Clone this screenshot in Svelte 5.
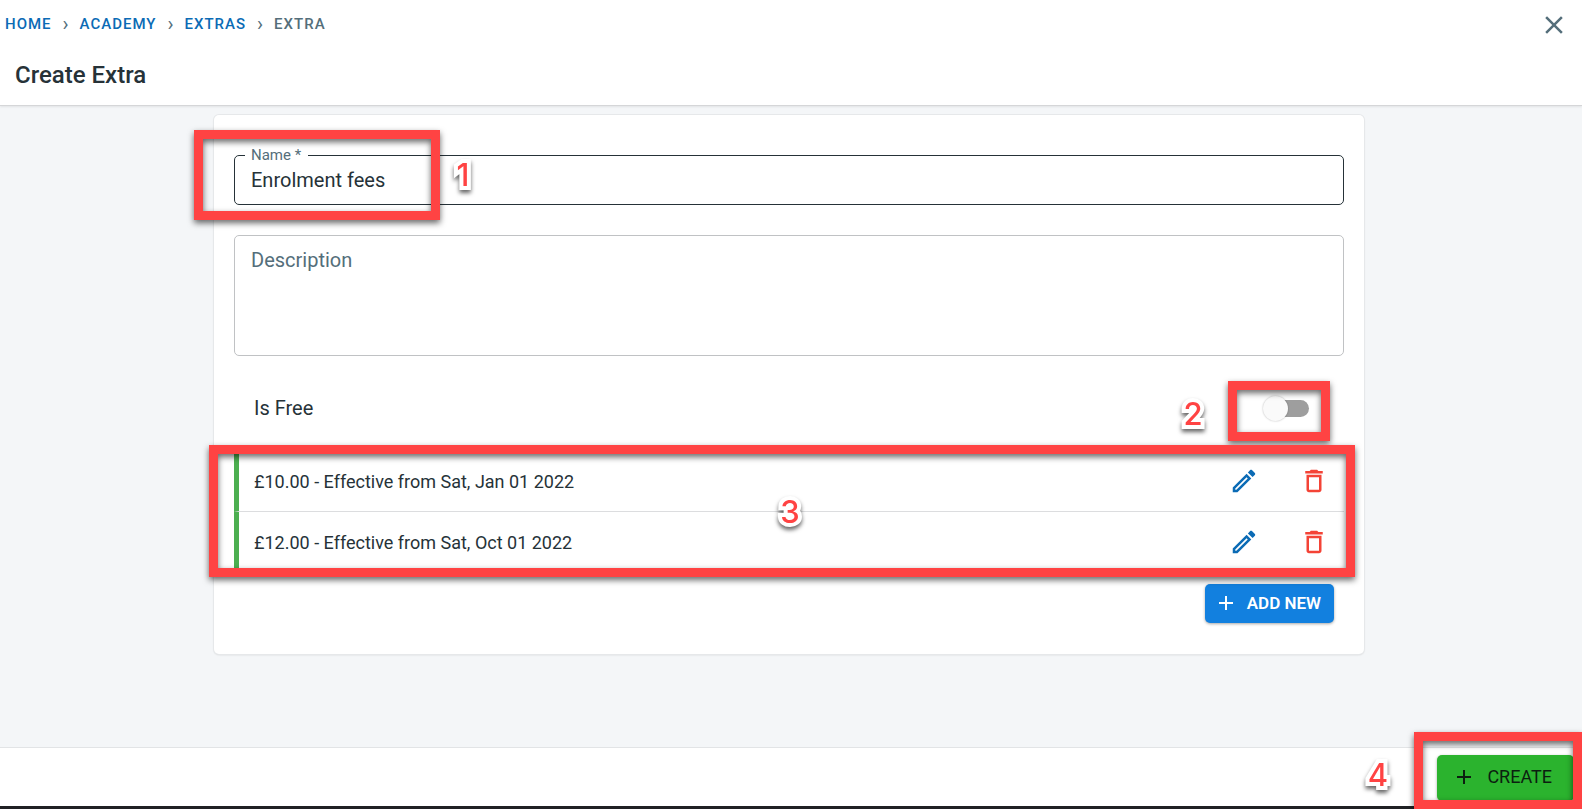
<script>
  const crumbs = ['Home', 'Academy', 'Extras'];
  const prices = [
    { amount: '£10.00', from: 'Sat, Jan 01 2022' },
    { amount: '£12.00', from: 'Sat, Oct 01 2022' }
  ];
  let name = $state('Enrolment fees');
  let description = $state('');
  let isFree = $state(false);
</script>

<div class="page">
  <header>
    <div class="top">
      <nav aria-label="Breadcrumb">
        {#each crumbs as crumb}
          <a href="#{crumb.toLowerCase()}">{crumb}</a><span class="sep">›</span>
        {/each}
        <span class="current">Extra</span>
      </nav>
      <button class="icon close" aria-label="Close">
        <svg viewBox="0 0 24 24"><path d="M19 6.41 17.59 5 12 10.59 6.41 5 5 6.41 10.59 12 5 17.59 6.41 19 12 13.41 17.59 19 19 17.59 13.41 12z" /></svg>
      </button>
    </div>
    <h1>Create Extra</h1>
  </header>

  <main>
    <form class="card" id="extra-form">
      <div class="field">
        <label for="name">Name *</label>
        <input id="name" type="text" bind:value={name} />
        <span class="frame frame-name"></span>
        <span class="mark mark-name">1</span>
      </div>

      <textarea aria-label="Description" placeholder="Description" bind:value={description}></textarea>

      <div class="free">
        <label for="free">Is Free</label>
        <input id="free" type="checkbox" role="switch" bind:checked={isFree} />
        <span class="frame frame-free"></span>
        <span class="mark mark-free">2</span>
      </div>

      <div class="prices">
        <ul>
          {#each prices as price}
            <li>
              <span class="price">{price.amount} - Effective from {price.from}</span>
              <button type="button" class="icon edit" aria-label="Edit price">
                <svg viewBox="0 0 24 24"><path d="m14.06 9.02.92.92L5.92 19H5v-.92l9.06-9.06M17.66 3c-.25 0-.51.1-.7.29l-1.83 1.83 3.75 3.75 1.83-1.83c.39-.39.39-1.02 0-1.41l-2.34-2.34c-.2-.2-.45-.29-.71-.29zm-3.6 3.19L3 17.25V21h3.75L17.81 9.94l-3.75-3.75z" /></svg>
              </button>
              <button type="button" class="icon delete" aria-label="Delete price">
                <svg viewBox="0 0 24 24"><path d="M6 19c0 1.1.9 2 2 2h8c1.1 0 2-.9 2-2V7H6v12zM8 9h8v10H8V9zm7.5-5-1-1h-5l-1 1H5v2h14V4h-3.5z" /></svg>
              </button>
            </li>
          {/each}
        </ul>
        <span class="frame frame-prices"></span>
        <span class="mark mark-prices">3</span>
      </div>

      <button type="button" class="btn add">
        <svg viewBox="0 0 24 24"><path d="M19 13h-6v6h-2v-6H5v-2h6V5h2v6h6v2z" /></svg>
        Add new
      </button>
    </form>
  </main>

  <footer>
    <button type="submit" form="extra-form" class="btn create">
      <svg viewBox="0 0 24 24"><path d="M19 13h-6v6h-2v-6H5v-2h6V5h2v6h6v2z" /></svg>
      Create
    </button>
    <span class="frame frame-create"></span>
    <span class="mark mark-create">4</span>
  </footer>
</div>

<style>
  :global(body) {
    margin: 0;
  }
  .page,
  .page * {
    box-sizing: border-box;
  }
  .page {
    display: flex;
    flex-direction: column;
    min-height: 100vh;
    overflow: hidden;
    background: #f4f6f8;
    color: #263238;
    font-family: Roboto, 'Liberation Sans', sans-serif;
  }
  button,
  input,
  textarea {
    font: inherit;
    color: inherit;
  }
  button {
    border: 0;
    padding: 0;
    background: none;
    cursor: pointer;
  }
  svg {
    display: block;
    fill: currentColor;
  }

  header {
    background: #fff;
    border-bottom: 1px solid #d5d6d8;
    box-shadow: 0 1px 2px rgba(0, 0, 0, 0.08);
    padding-bottom: 15px;
  }
  .top {
    display: flex;
    justify-content: space-between;
    align-items: center;
    height: 50px;
    padding: 0 13px 0 5px;
  }
  nav {
    display: flex;
    align-items: center;
    padding-bottom: 2px;
    font-size: 15px;
    font-weight: 500;
    line-height: 20px;
    letter-spacing: 1px;
    text-transform: uppercase;
    color: #546e7a;
  }
  nav a {
    color: #0b6bb5;
    text-decoration: none;
  }
  .sep {
    margin: 0 10px 0 11px;
    font-size: 20px;
    font-weight: 400;
  }
  .icon svg {
    width: 30px;
    height: 30px;
  }
  .close {
    color: #546e7a;
  }
  h1 {
    margin: 10px 15px 0;
    font-size: 24px;
    line-height: 30px;
    font-weight: 500;
  }

  main {
    flex: 1;
    padding: 9px 4px 32px 0;
  }
  .card {
    display: flex;
    flex-direction: column;
    max-width: 1150px;
    margin: 0 auto;
    padding: 40px 20px 31px;
    background: #fff;
    border-radius: 5px;
    box-shadow: 0 0 0 1px #e6e8ea, 0 1px 2px rgba(0, 0, 0, 0.15);
  }

  .field {
    position: relative;
  }
  .field input {
    display: block;
    width: 100%;
    height: 50px;
    padding: 0 16px;
    border: 1px solid #263238;
    border-radius: 5px;
    background: #fff;
    font-size: 20px;
    outline: none;
  }
  .field label {
    position: absolute;
    left: 11px;
    top: -10px;
    padding: 0 7px 0 6px;
    background: #fff;
    font-size: 15px;
    line-height: 20px;
    color: #546e7a;
  }
  textarea {
    display: block;
    height: 121px;
    margin-top: 30px;
    padding: 11px 16px;
    border: 1px solid #c0c2c4;
    border-radius: 5px;
    font-size: 20px;
    line-height: 26px;
    resize: none;
    outline: none;
  }
  textarea::placeholder {
    color: #546e7a;
    opacity: 1;
  }

  .free {
    position: relative;
    display: flex;
    justify-content: space-between;
    align-items: center;
    height: 60px;
    margin-top: 22px;
    padding: 0 35px 0 20px;
    font-size: 20px;
  }
  .free input {
    appearance: none;
    display: flex;
    align-items: center;
    width: 42px;
    height: 17px;
    margin: 0;
    border-radius: 9px;
    background: #9e9e9e;
  }
  .free input::before {
    content: '';
    flex: none;
    width: 25px;
    height: 25px;
    margin-left: -4px;
    border-radius: 50%;
    background: #fafafa;
    box-shadow: 0 0 2px rgba(0, 0, 0, 0.3);
  }
  .free input:checked::before {
    margin-left: 21px;
  }

  .prices {
    position: relative;
    margin-top: 13px;
  }
  ul {
    margin: 0;
    padding: 0;
    list-style: none;
  }
  li {
    display: flex;
    align-items: center;
    gap: 40px;
    height: 60px;
    padding: 0 15px;
    border-left: 5px solid #4caf50;
    font-size: 18px;
  }
  li + li {
    height: 61px;
    border-top: 1px solid #dcdddf;
  }
  .price {
    flex: 1;
  }
  .edit {
    color: #0b6bb5;
  }
  .delete {
    color: #f44336;
  }

  .btn {
    display: flex;
    align-items: center;
    border-radius: 5px;
    text-transform: uppercase;
    box-shadow: 0 1px 3px rgba(0, 0, 0, 0.35);
  }
  .btn svg {
    width: 24px;
    height: 24px;
  }
  .add {
    align-self: flex-end;
    gap: 9px;
    height: 39px;
    margin: 12px 10px 0 0;
    padding: 0 13px 2px 9px;
    background: #1280df;
    color: #fff;
    font-size: 17px;
    font-weight: 600;
  }

  footer {
    position: relative;
    display: flex;
    justify-content: flex-end;
    height: 62px;
    padding: 7px 8px 0;
    background: #fff;
    border-top: 1px solid #e2e4e6;
    border-bottom: 3px solid #202124;
  }
  .create {
    gap: 11px;
    height: 46px;
    padding: 0 22px 3px 15px;
    background: #2bb32e;
    color: #0c1f10;
    font-size: 18px;
  }

  .frame {
    position: absolute;
    border: 9px solid #ff4343;
    filter: drop-shadow(0 3px 3px rgba(0, 0, 0, 0.6));
    pointer-events: none;
  }
  .frame-name {
    left: -40px;
    top: -25px;
    width: 246px;
    height: 90px;
  }
  .frame-free {
    right: 14px;
    top: 3px;
    width: 102px;
    height: 60px;
  }
  .frame-prices {
    left: -25px;
    right: -11px;
    top: -6px;
    bottom: -5px;
  }
  .frame-create {
    right: 0;
    top: -16px;
    bottom: -3px;
    width: 168px;
  }
  .mark {
    position: absolute;
    width: 24px;
    text-align: center;
    font-family: Inter, 'Liberation Sans', sans-serif;
    font-size: 31px;
    font-weight: 500;
    line-height: 36px;
    color: #ff4343;
    -webkit-text-stroke: 8px #fff;
    stroke-linejoin: round;
    paint-order: stroke fill;
    filter: drop-shadow(0 3px 2px rgba(0, 0, 0, 0.6));
    pointer-events: none;
  }
  .mark-name {
    left: 217px;
    top: 2px;
  }
  .mark-free {
    right: 139px;
    top: 18px;
  }
  .mark-prices {
    left: 50%;
    top: 43px;
    margin-left: -11px;
  }
  .mark-create {
    right: 192px;
    top: 9px;
  }
</style>
